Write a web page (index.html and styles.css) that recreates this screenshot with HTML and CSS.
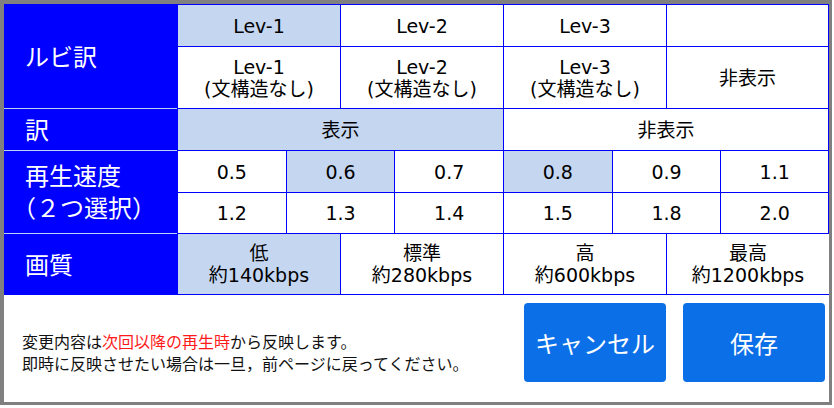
FILE: index.html
```html
<!doctype html>
<html lang="ja">
    <head>
        <meta charset="UTF-8" />
        <meta name="viewport" content="width=device-width, initial-scale=1.0" />
        <title>再生設定</title>
        <link rel="stylesheet" href="styles.css">
    </head>
    <body>
        <div class="frame">
            <!-- Settings table -->
            <div class="settings">
                <div class="head span-2"><span>ルビ訳</span></div>
                <div class="cell c3 selected"><span>Lev-1</span></div>
                <div class="cell c3"><span>Lev-2</span></div>
                <div class="cell c3"><span>Lev-3</span></div>
                <div class="cell c3"></div>
                <div class="cell c3"><span>Lev-1<br>(文構造なし)</span></div>
                <div class="cell c3"><span>Lev-2<br>(文構造なし)</span></div>
                <div class="cell c3"><span>Lev-3<br>(文構造なし)</span></div>
                <div class="cell c3"><span>非表示</span></div>

                <div class="head"><span>訳</span></div>
                <div class="cell c6 selected"><span>表示</span></div>
                <div class="cell c6"><span>非表示</span></div>

                <div class="head span-2"><span>再生速度<br><span class="paren">（２つ選択）</span></span></div>
                <div class="cell c2"><span>0.5</span></div>
                <div class="cell c2 selected"><span>0.6</span></div>
                <div class="cell c2"><span>0.7</span></div>
                <div class="cell c2 selected"><span>0.8</span></div>
                <div class="cell c2"><span>0.9</span></div>
                <div class="cell c2"><span>1.1</span></div>
                <div class="cell c2"><span>1.2</span></div>
                <div class="cell c2"><span>1.3</span></div>
                <div class="cell c2"><span>1.4</span></div>
                <div class="cell c2"><span>1.5</span></div>
                <div class="cell c2"><span>1.8</span></div>
                <div class="cell c2"><span>2.0</span></div>

                <div class="head last"><span>画質</span></div>
                <div class="cell c3 selected"><span>低<br>約140kbps</span></div>
                <div class="cell c3"><span>標準<br>約280kbps</span></div>
                <div class="cell c3"><span>高<br>約600kbps</span></div>
                <div class="cell c3"><span>最高<br>約1200kbps</span></div>
            </div>

            <!-- Footer -->
            <div class="footer">
                <p class="note">
                    変更内容は<span class="warn">次回以降の再生時</span>から反映します。<br>
                    即時に反映させたい場合は一旦，前ページに戻ってください。
                </p>
                <button class="btn">キャンセル</button>
                <button class="btn">保存</button>
            </div>
        </div>
    </body>
</html>
```

FILE: styles.css
```css
body {
    margin: 0;
    padding: 0;
    background: #fff;
    font-family: "Noto Sans CJK JP", "Noto Sans", sans-serif;
    color: #000;
}
.frame {
    width: 832px;
    height: 405px;
    box-sizing: border-box;
    border: 3px solid #808080;
    border-top-width: 4px;
    border-left-width: 4px;
    display: flex;
    flex-direction: column;
}
.settings {
    display: grid;
    grid-template-columns: 173px repeat(12, 1fr);
    grid-template-rows: 42px 62px 42px 42px 41px 61px;
    border-top: 1px solid #0000ff;
}
.head {
    grid-column: 1;
    background: #0000ff;
    color: #fff;
    font-size: 24px;
    line-height: 32px;
    padding: 0 0 2px 21px;
    display: flex;
    align-items: center;
    border-bottom: 1px solid #c0cef0;
}
.head.last {
    border-bottom: none;
}
.head .paren {
    margin-left: -13px;
}
.span-2 {
    grid-row: span 2;
}
.cell {
    display: flex;
    align-items: center;
    justify-content: center;
    text-align: center;
    font-family: "DejaVu Sans", "Noto Sans CJK JP", sans-serif;
    font-size: 19px;
    line-height: 22px;
    border-left: 1px solid #0000ff;
    border-bottom: 1px solid #0000ff;
    background: #fff;
}
.cell:nth-child(5),
.cell:nth-child(9),
.cell:nth-child(12),
.cell:nth-child(19),
.cell:nth-child(25),
.cell:nth-child(31) {
    border-right: 1px solid #0000ff;
}
.c2 {
    grid-column: span 2;
}
.c3 {
    grid-column: span 3;
}
.c6 {
    grid-column: span 6;
}
.selected {
    background: #c5d6f1;
}
.footer {
    flex: 1;
    display: flex;
    align-items: flex-start;
    padding: 8px 4px 0 18px;
    gap: 17px;
}
.note {
    flex: 1;
    margin: 27px 0 0;
    font-size: 16px;
    line-height: 22px;
    color: #111;
}
.warn {
    color: #ff1a1a;
}
.btn {
    width: 142px;
    height: 79px;
    border: none;
    border-radius: 4px;
    background: #0b6fe8;
    color: #fff;
    font-family: inherit;
    font-size: 24px;
    cursor: pointer;
}
```
